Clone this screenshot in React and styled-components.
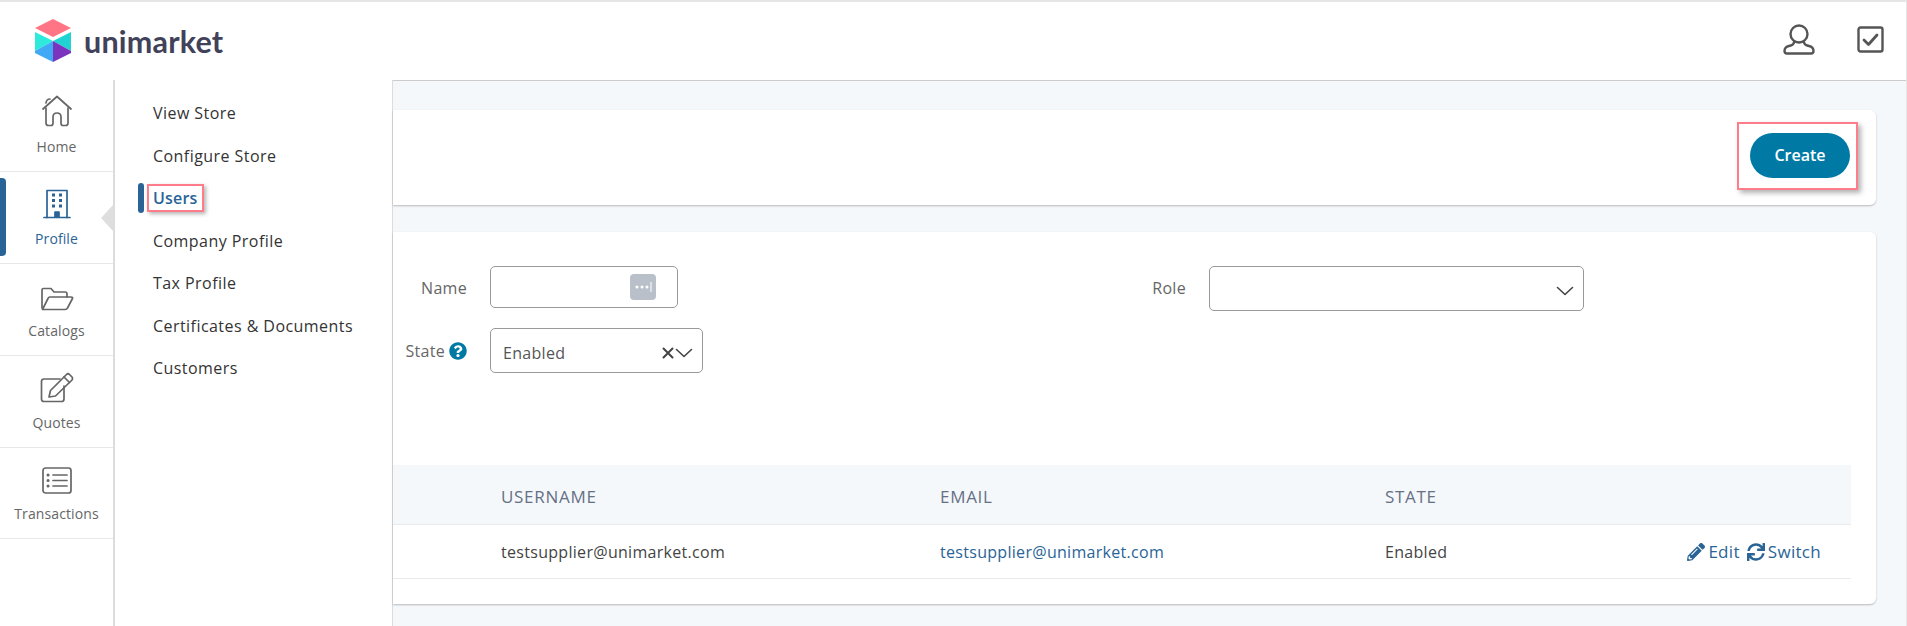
import React from 'react';
import styled, { createGlobalStyle } from 'styled-components';
import { FaPencilAlt, FaSync, FaQuestionCircle } from 'react-icons/fa';

const GlobalStyle = createGlobalStyle`
  html, body {
    margin: 0;
    padding: 0;
    height: 100%;
    overflow: hidden;
    background: #fff;
    font-family: "Open Sans", Lato, sans-serif;
    font-size: 16px;
    letter-spacing: 0.3px;
    color: #333;
  }
`;

const Page = styled.div`
  width: 1907px;
  height: 626px;
  display: flex;
  flex-direction: column;
  border-top: 2px solid #e6e6e6;
  border-right: 1px solid #e6e6e6;
  box-sizing: border-box;
  overflow: hidden;
`;

const Header = styled.header`
  flex: 0 0 78px;
  display: flex;
  align-items: center;
  justify-content: space-between;
  padding: 0 22px 4px 35px;
  box-sizing: border-box;
`;

const Brand = styled.div`
  display: flex;
  align-items: center;
  gap: 13px;
  margin-top: 3px;
`;

const BrandName = styled.span`
  font-family: Lato, sans-serif;
  font-weight: 700;
  font-size: 30.5px;
  letter-spacing: 0.2px;
  color: #414259;
  line-height: 1;
  margin-top: 1px;
`;

const HeaderIcons = styled.div`
  display: flex;
  align-items: center;
  gap: 42px;
`;

const Body = styled.div`
  flex: 1;
  display: flex;
  min-height: 0;
`;

const Rail = styled.nav`
  flex: 0 0 113px;
  display: flex;
  flex-direction: column;
`;

const RailItem = styled.a`
  position: relative;
  flex: 0 0 91.9px;
  border-bottom: 1px solid #e8e8e8;
  display: flex;
  flex-direction: column;
  align-items: center;
  justify-content: flex-end;
  padding-bottom: 15px;
  box-sizing: border-box;
  gap: 10px;
  font-size: 14px;
  letter-spacing: 0.1px;
  color: ${p => (p.$active ? '#2a6496' : '#666')};

  ${p => p.$active && `
    &::before {
      content: '';
      position: absolute;
      left: 0;
      top: 6px;
      bottom: 7px;
      width: 6px;
      border-radius: 0 4px 4px 0;
      background: #2a6496;
    }
    &::after {
      content: '';
      position: absolute;
      right: 0;
      top: 33px;
      border-style: solid;
      border-width: 13px 12px 13px 0;
      border-color: transparent #dedede transparent transparent;
    }
  `}
`;

const SubMenu = styled.ul`
  flex: 0 0 280px;
  box-sizing: border-box;
  margin: 0;
  padding: 12px 0 0 38px;
  list-style: none;
  background: #fff;
  border-left: 2px solid #dcdcdc;
  border-right: 1px solid #dcdcdc;
`;

const SubItem = styled.li`
  position: relative;
  height: 42.5px;
  display: flex;
  align-items: center;
  color: #333;
  letter-spacing: 0.45px;
`;

const ActiveSub = styled.span`
  color: #2a6496;
  font-weight: 600;
  line-height: 20px;
  letter-spacing: 0.2px;
  border: 2px solid #ff7d8b;
  padding: 2px 4px;
  margin-left: -6px;
  box-shadow: 2px 2px 4px rgba(0, 0, 0, 0.3);

  &::before {
    content: '';
    position: absolute;
    left: -15px;
    top: 6px;
    width: 6px;
    height: 30px;
    border-radius: 3px;
    background: #2a6496;
  }
`;

const Main = styled.main`
  flex: 1;
  min-width: 0;
  background: #f5f8fb;
  border-top: 1px solid #ccc;
  padding: 29px 30px 0 0;
  display: flex;
  flex-direction: column;
  gap: 27px;
`;

const Card = styled.section`
  background: #fff;
  border-radius: 0 6px 6px 0;
  box-shadow: 0 1px 2px rgba(0, 0, 0, 0.25);
`;

const ActionCard = styled(Card)`
  height: 95px;
  display: flex;
  align-items: center;
  justify-content: flex-end;
  padding-right: 18px;
  box-sizing: border-box;
`;

const CreateHighlight = styled.div`
  border: 2px solid #ff7d8b;
  padding: 9px 6px 10px 11px;
  margin-bottom: 4px;
  box-shadow: 3px 3px 5px rgba(0, 0, 0, 0.3);
`;

const CreateButton = styled.button`
  display: block;
  width: 100px;
  height: 45px;
  border: 0;
  border-radius: 23px;
  background: #007aa5;
  color: #fff;
  font: 600 16px "Open Sans", sans-serif;
`;

const FilterCard = styled(Card)`
  height: 372px;
  padding: 34px 25px 0 0;
  box-sizing: border-box;
`;

const FilterGrid = styled.div`
  display: grid;
  grid-template-columns: 74px 213px 460px 375px;
  column-gap: 23px;
  row-gap: 17px;
  align-items: start;
`;

const FieldLabel = styled.label`
  display: flex;
  align-items: center;
  justify-content: flex-end;
  gap: 4px;
  height: 44px;
  color: #666;
`;

const StateLabel = styled(FieldLabel)`
  height: 45px;
`;

const TextBox = styled.div`
  width: 188px;
  height: 42px;
  border: 1px solid #999;
  border-radius: 5px;
  box-sizing: border-box;
  display: flex;
  align-items: center;
  justify-content: flex-end;
  padding-right: 21px;
`;

const PasswordBadge = styled.span`
  width: 26px;
  height: 26px;
  border-radius: 4px;
  background: #bac0ca;
  display: flex;
  align-items: center;
  justify-content: center;
`;

const SelectBox = styled.div`
  height: 45px;
  border: 1px solid #999;
  border-radius: 5px;
  box-sizing: border-box;
  display: flex;
  align-items: center;
  justify-content: space-between;
  padding: 4px 9px 0 12px;
  color: #555;
`;

const SelectTools = styled.span`
  display: flex;
  align-items: center;
  margin-left: auto;
  gap: 1px;
`;

const Table = styled.div`
  margin-top: 92px;
`;

const TableRow = styled.div`
  display: grid;
  grid-template-columns: 108px 439px 445px 1fr auto;
  align-items: center;
  padding-right: 30px;
  background: #fff;
  border-bottom: 1px solid #e9ecef;
  box-sizing: border-box;
  height: 54px;
  color: #444;
`;

const HeadRow = styled(TableRow)`
  height: 60px;
  padding-top: 4px;
  background: #f5f8fb;
  color: #667085;
  font-size: 17px;
  letter-spacing: 0.7px;
`;

const Link = styled.a`
  color: #2a6496;
`;

const RowActions = styled.div`
  display: flex;
  align-items: center;
  gap: 7px;
  color: #2a6496;
  font-size: 17px;
`;

const ActionLink = styled.span`
  display: inline-flex;
  align-items: center;
  gap: 3px;
`;

const Glyph = styled.svg`
  display: block;
  fill: none;
  stroke: ${p => p.$color || '#666'};
  stroke-width: ${p => p.$weight || 1.7};
  stroke-linecap: round;
  stroke-linejoin: round;
`;

const LogoMark = () => (
  <svg width="36" height="43" viewBox="0 0 36 43">
    <path d="M18 0 L36 9 L18 18 L0 9 Z" fill="#ff7585" />
    <path d="M0 13 L18 22 L18 22 L0 32 Z" fill="#2eeadb" />
    <path d="M36 13 L18 22 L36 32 Z" fill="#22d3d3" />
    <path d="M0 32 L18 22 L18 43 L0 34 Z" fill="#3fa9f5" />
    <path d="M36 32 L18 22 L18 43 L36 34 Z" fill="#7b34bd" />
  </svg>
);

const HomeIcon = () => (
  <Glyph width="30" height="32" viewBox="0 0 30 32">
    <path d="M1 14 L15 1.500 L29 14" />
    <path d="M4 13 V28 Q4 30.500 6.500 30.500 H9 Q11 30.500 11 28 V22 Q11 18 15 18 Q19 18 19 22 V28 Q19 30.500 21 30.500 H23.500 Q26 30.500 26 28 V13" />
    <path d="M4 8 Q4.500 4 8 4" />
  </Glyph>
);

const BuildingIcon = () => (
  <Glyph width="28" height="30" viewBox="0 0 28 30" $color="#2a6496">
    <path d="M4 28.500 V1.500 H24 V28.500" />
    <path d="M1 28.500 H27" />
    <path d="M9 6 h3 M16 6 h3 M9 11.500 h3 M16 11.500 h3 M9 17 h3 M16 17 h3" strokeWidth="3" strokeLinecap="butt" />
    <path d="M12 28 V23 H16 V28" fill="#2a6496" />
  </Glyph>
);

const FolderIcon = () => (
  <Glyph width="34" height="24" viewBox="0 0 34 24">
    <path d="M2 21 V3 Q2 1.500 3.500 1.500 H11 L14 5 H25 Q27 5 27 7 V10" />
    <path d="M2.500 22.500 L8 11.500 Q8.500 10 10 10 H31 Q33 10 32.500 11.500 L27.500 21 Q27 22.500 25 22.500 Z" />
  </Glyph>
);

const EditIcon = () => (
  <Glyph width="34" height="31" viewBox="0 0 34 31">
    <path d="M24 14 V27 Q24 29.500 21.500 29.500 H4 Q1.500 29.500 1.500 27 V9.500 Q1.500 7 4 7 H20" />
    <path d="M9 25 L10.500 18.500 L26.500 2.500 Q28 1 29.500 2.500 L32 5 Q33 6.500 32 8 L15.500 24 Z" />
    <path d="M24 5 L29.500 10.500" />
  </Glyph>
);

const ListIcon = () => (
  <Glyph width="30" height="27" viewBox="0 0 30 27">
    <rect x="1" y="1" width="28" height="25" rx="2.500" />
    <path d="M11 8 H25 M11 13.500 H25 M11 19 H25" />
    <path d="M6 8 h0.100 M6 13.500 h0.100 M6 19 h0.100" strokeWidth="3" />
  </Glyph>
);

const UserIcon = () => (
  <Glyph width="32" height="31" viewBox="0 0 32 31" $color="#555" $weight="2.400">
    <circle cx="16" cy="10" r="8.500" />
    <path d="M11 18 Q11 21 6 22 Q1.500 23 1.500 27 Q1.500 29.500 4 29.500 H28 Q30.500 29.500 30.500 27 Q30.500 23 26 22 Q21 21 21 18" />
  </Glyph>
);

const CheckIcon = () => (
  <Glyph width="27" height="27" viewBox="0 0 27 27" $color="#555" $weight="2.400">
    <rect x="1.500" y="1.500" width="24" height="24" rx="2" />
    <path d="M7 14 L11.500 18.500 L20 9" strokeWidth="2.800" />
  </Glyph>
);

const Chevron = () => (
  <Glyph width="18" height="10" viewBox="0 0 18 10" $color="#444" $weight="1.600">
    <path d="M1.500 1.500 L9 8.500 L16.500 1.500" />
  </Glyph>
);

const Cross = () => (
  <Glyph width="12" height="12" viewBox="0 0 12 12" $color="#444" $weight="2">
    <path d="M1.500 1.500 L10.500 10.500 M10.500 1.500 L1.500 10.500" />
  </Glyph>
);

const railItems = [
  { label: 'Home', icon: <HomeIcon /> },
  { label: 'Profile', icon: <BuildingIcon />, active: true },
  { label: 'Catalogs', icon: <FolderIcon /> },
  { label: 'Quotes', icon: <EditIcon /> },
  { label: 'Transactions', icon: <ListIcon /> },
];

const subItems = ['View Store', 'Configure Store', 'Users', 'Company Profile', 'Tax Profile', 'Certificates & Documents', 'Customers'];

export default function App() {
  return (
    <>
      <GlobalStyle />
      <Page>
        <Header>
          <Brand>
            <LogoMark />
            <BrandName>unimarket</BrandName>
          </Brand>
          <HeaderIcons>
            <UserIcon />
            <CheckIcon />
          </HeaderIcons>
        </Header>
        <Body>
          <Rail>
            {railItems.map(item => (
              <RailItem key={item.label} $active={item.active}>
                {item.icon}
                {item.label}
              </RailItem>
            ))}
          </Rail>
          <SubMenu>
            {subItems.map(name => (
              <SubItem key={name}>
                {name === 'Users' ? <ActiveSub>{name}</ActiveSub> : name}
              </SubItem>
            ))}
          </SubMenu>
          <Main>
            <ActionCard>
              <CreateHighlight>
                <CreateButton>Create</CreateButton>
              </CreateHighlight>
            </ActionCard>
            <FilterCard>
              <FilterGrid>
                <FieldLabel>Name</FieldLabel>
                <TextBox>
                  <PasswordBadge>
                    <svg width="18" height="10" viewBox="0 0 18 10" fill="#fff">
                      <circle cx="3" cy="5" r="1.500" />
                      <circle cx="8" cy="5" r="1.500" />
                      <circle cx="13" cy="5" r="1.500" />
                      <rect x="16.500" y="0" width="1" height="10" />
                    </svg>
                  </PasswordBadge>
                </TextBox>
                <FieldLabel>Role</FieldLabel>
                <SelectBox>
                  <SelectTools><Chevron /></SelectTools>
                </SelectBox>
                <StateLabel>
                  State <FaQuestionCircle size={18} color="#007aa5" />
                </StateLabel>
                <SelectBox>
                  Enabled
                  <SelectTools><Cross /><Chevron /></SelectTools>
                </SelectBox>
              </FilterGrid>
              <Table>
                <HeadRow>
                  <span />
                  <span>USERNAME</span>
                  <span>EMAIL</span>
                  <span>STATE</span>
                  <span />
                </HeadRow>
                <TableRow>
                  <span />
                  <span>testsupplier@unimarket.com</span>
                  <Link>testsupplier@unimarket.com</Link>
                  <span>Enabled</span>
                  <RowActions>
                    <ActionLink><FaPencilAlt size={18} />Edit</ActionLink>
                    <ActionLink><FaSync size={18} />Switch</ActionLink>
                  </RowActions>
                </TableRow>
              </Table>
            </FilterCard>
          </Main>
        </Body>
      </Page>
    </>
  );
}
